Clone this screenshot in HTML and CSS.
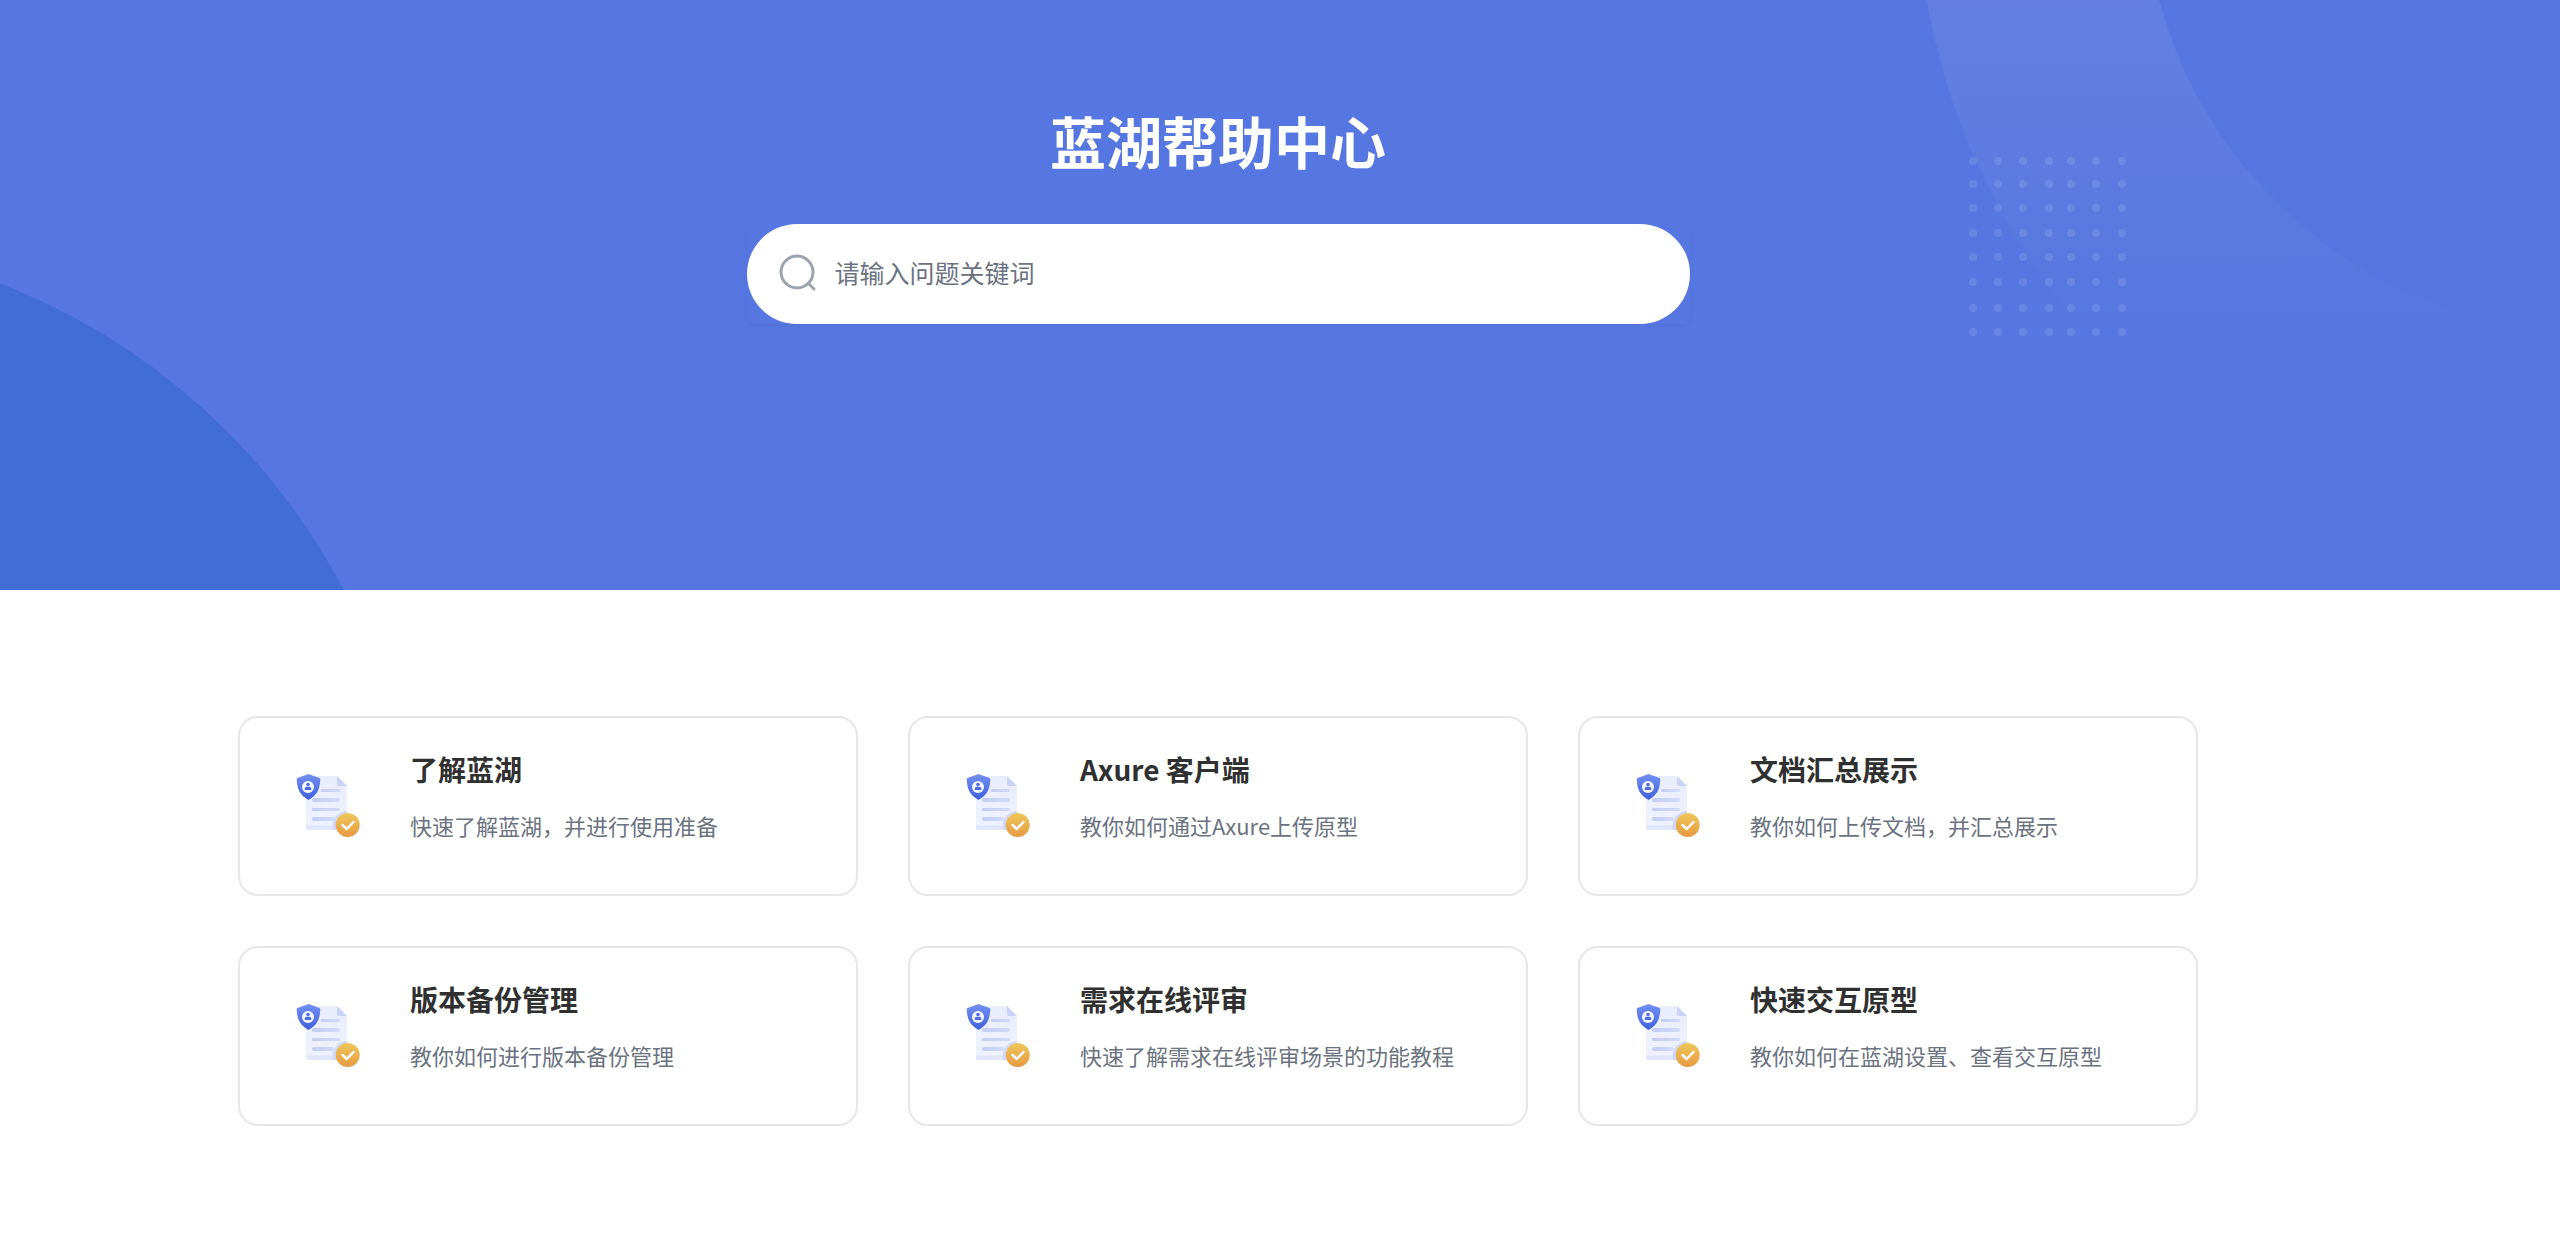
FILE: index.html
```
<!DOCTYPE html>
<html lang="zh-CN">
<head>
<meta charset="utf-8">
<meta name="viewport" content="width=device-width, initial-scale=1">
<title>蓝湖帮助中心</title>
<link rel="stylesheet" href="styles.css">
</head>
<body>
<svg class="defs" width="0" height="0" aria-hidden="true">
  <defs>
    <linearGradient id="sheet" x1="0" y1="0" x2="0" y2="1"><stop offset="0" stop-color="#e9edfc"/><stop offset="0.9" stop-color="#eff2fe"/><stop offset="0.93" stop-color="#dfe4fa"/><stop offset="1" stop-color="#e3e8fb"/></linearGradient>
    <linearGradient id="line" x1="0" y1="0" x2="1" y2="0"><stop offset="0" stop-color="#c3cdf5"/><stop offset="1" stop-color="#d2daf8"/></linearGradient>
    <linearGradient id="shield" x1="0" y1="0" x2="0" y2="1"><stop offset="0" stop-color="#7490f5"/><stop offset="1" stop-color="#3f60dd"/></linearGradient>
    <linearGradient id="gold" x1="0" y1="0" x2="0" y2="1"><stop offset="0" stop-color="#efc75a"/><stop offset="1" stop-color="#e69a44"/></linearGradient>
    <symbol id="doc" viewBox="0 0 80 80">
      <path d="M20 10H49L59 20V62Q59 64 57 64H20Q18 64 18 62V12Q18 10 20 10Z" fill="url(#sheet)"/>
      <path d="M49 10L59 20H51Q49 20 49 18Z" fill="#c9d3f8"/>
      <path d="M48 64H45A15 15 0 0 1 59 45V64Z" fill="#d0d8fa"/>
      <rect x="33" y="23" width="19" height="3" rx="1" fill="url(#line)"/>
      <rect x="24" y="32" width="28" height="4" rx="2" fill="url(#line)"/>
      <rect x="24" y="42" width="28" height="3" rx="1" fill="url(#line)"/>
      <rect x="24" y="51" width="22" height="4" rx="2" fill="url(#line)"/>
      <path d="M20.500 8L31.500 12Q32.500 12.500 32.300 14C31.500 24 29 29 20.500 34C12 29 9.500 24 8.700 14Q8.500 12.500 9.500 12Z" fill="url(#shield)"/>
      <circle cx="20" cy="21" r="6" fill="#f6f8ff"/>
      <circle cx="20" cy="18.500" r="1.800" fill="#4e6de4"/>
      <path d="M16.800 24V22.500Q16.800 20.800 18.500 20.800H21.500Q23.200 20.800 23.200 22.500V24Z" fill="#4e6de4"/>
      <circle cx="59.700" cy="59" r="12" fill="url(#gold)"/>
      <path d="M54.500 59L58.700 63L65.500 56" fill="none" stroke="#fff" stroke-width="2.500" stroke-linecap="round" stroke-linejoin="round"/>
    </symbol>
  </defs>
</svg>

<header class="hero">
  <svg class="hero-left" viewBox="0 0 420 314" aria-hidden="true"><circle cx="-237" cy="619" r="656" fill="#436dd6"/></svg>
  <svg class="hero-right" viewBox="0 0 660 591" aria-hidden="true">
    <defs>
      <linearGradient id="ring" gradientUnits="userSpaceOnUse" x1="0" y1="0" x2="0" y2="330"><stop offset="0" stop-color="#e1c7e1" stop-opacity="0.1"/><stop offset="1" stop-color="#e1c7e1" stop-opacity="0"/></linearGradient>
      <g id="dots">
        <circle cx="73" cy="0" r="4"/><circle cx="98" cy="0" r="4"/><circle cx="123" cy="0" r="4"/><circle cx="149" cy="0" r="4"/><circle cx="171" cy="0" r="4"/><circle cx="196" cy="0" r="4"/><circle cx="222" cy="0" r="4"/>
      </g>
    </defs>
    <circle cx="693" cy="-117" r="563" fill="none" stroke="url(#ring)" stroke-width="227"/>
    <g fill="#fff" fill-opacity="0.11">
      <use href="#dots" y="161"/><use href="#dots" y="184"/><use href="#dots" y="208"/><use href="#dots" y="233"/><use href="#dots" y="257"/><use href="#dots" y="282"/><use href="#dots" y="308"/><use href="#dots" y="332"/>
    </g>
  </svg>
  <h1 class="hero-title">蓝湖帮助中心</h1>
  <form class="search" role="search">
    <div class="search-box">
      <label class="search-label" for="keyword"><svg class="search-icon" viewBox="0 0 40 40" role="img" aria-label="搜索"><circle cx="18" cy="18" r="16"/><path d="M30 30L35 35"/></svg></label>
      <input class="search-input" id="keyword" type="text" placeholder="请输入问题关键词">
    </div>
  </form>
</header>

<main class="topics">
  <a class="card" href="#start"><svg class="card-icon" aria-hidden="true"><use href="#doc"/></svg><div class="card-text"><h2 class="card-title">了解蓝湖</h2><p class="card-desc">快速了解蓝湖，并进行使用准备</p></div></a>
  <a class="card" href="#axure"><svg class="card-icon" aria-hidden="true"><use href="#doc"/></svg><div class="card-text"><h2 class="card-title">Axure 客户端</h2><p class="card-desc">教你如何通过Axure上传原型</p></div></a>
  <a class="card" href="#docs"><svg class="card-icon" aria-hidden="true"><use href="#doc"/></svg><div class="card-text"><h2 class="card-title">文档汇总展示</h2><p class="card-desc">教你如何上传文档，并汇总展示</p></div></a>
  <a class="card" href="#versions"><svg class="card-icon" aria-hidden="true"><use href="#doc"/></svg><div class="card-text"><h2 class="card-title">版本备份管理</h2><p class="card-desc">教你如何进行版本备份管理</p></div></a>
  <a class="card" href="#review"><svg class="card-icon" aria-hidden="true"><use href="#doc"/></svg><div class="card-text"><h2 class="card-title">需求在线评审</h2><p class="card-desc">快速了解需求在线评审场景的功能教程</p></div></a>
  <a class="card" href="#prototype"><svg class="card-icon" aria-hidden="true"><use href="#doc"/></svg><div class="card-text"><h2 class="card-title">快速交互原型</h2><p class="card-desc">教你如何在蓝湖设置、查看交互原型</p></div></a>
</main>
</body>
</html>
```

FILE: styles.css
```
* {
  box-sizing: border-box;
}

body {
  margin: 0;
  background: #fff;
  color: #303030;
  font-family: "Noto Sans CJK SC", sans-serif;
}

.defs {
  position: absolute;
}

.hero {
  position: relative;
  display: flex;
  flex-direction: column;
  align-items: center;
  gap: 44px;
  min-height: 590px;
  padding: 100px 124px 0 0;
  overflow: hidden;
  background: #5677e1;
}

.hero-left {
  position: absolute;
  left: 0;
  bottom: 0;
  width: 420px;
  height: 314px;
}

.hero-right {
  position: absolute;
  right: 0;
  top: 0;
  width: 660px;
  height: 591px;
}

.hero-title {
  position: relative;
  margin: 0;
  color: #fff;
  font-size: 56px;
  line-height: 80px;
  font-weight: 700;
}

.search {
  position: relative;
  width: 100%;
  max-width: 943px;
  border-radius: 8px;
  box-shadow: 0 2px 4px rgba(0, 0, 0, 0.04);
}

.search-box {
  display: flex;
  align-items: center;
  gap: 16px;
  height: 100px;
  padding: 0 32px;
  border-radius: 50px;
  background: #fff;
}

.search-label {
  display: flex;
}

.search-icon {
  width: 40px;
  height: 40px;
  fill: none;
  stroke: #9ca3af;
  stroke-width: 3;
  stroke-linecap: round;
}

.search-input {
  flex: 1;
  min-width: 0;
  height: 60px;
  padding: 0 0 4px;
  border: 0;
  outline: 0;
  background: none;
  color: #303030;
  font: inherit;
  font-size: 25px;
}

.search-input::placeholder {
  color: #6b7280;
  opacity: 1;
}

.topics {
  display: grid;
  grid-template-columns: repeat(auto-fit, minmax(500px, 1fr));
  gap: 50px;
  max-width: 2084px;
  margin: 0 auto;
  padding: 126px 124px 100px 0;
}

.card {
  display: flex;
  align-items: center;
  gap: 42px;
  min-height: 180px;
  padding: 0 48px;
  border: 2px solid #e5e7eb;
  border-radius: 20px;
  color: inherit;
  text-decoration: none;
}

.card-icon {
  flex: none;
  width: 80px;
  height: 80px;
}

.card-text {
  display: flex;
  flex-direction: column;
  gap: 20px;
  padding-bottom: 22px;
}

.card-title {
  margin: 0;
  font-size: 28px;
  line-height: 40px;
  font-weight: 700;
}

.card-desc {
  margin: 0;
  color: #6b7280;
  font-size: 22px;
  line-height: 32px;
}
```
